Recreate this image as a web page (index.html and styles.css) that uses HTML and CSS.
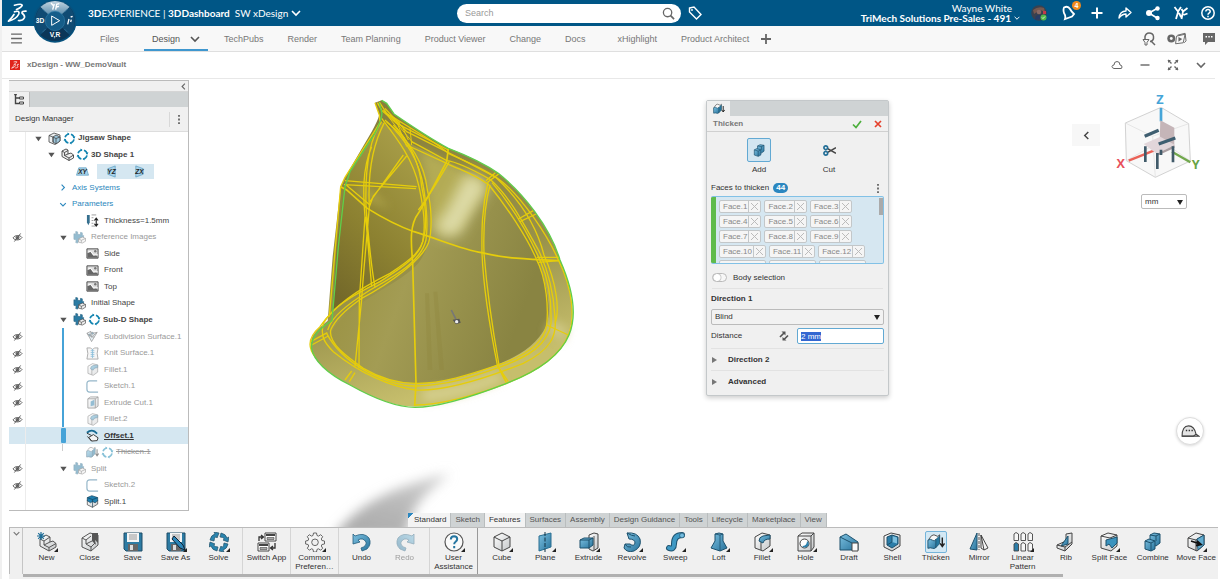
FILE: index.html
```html
<!DOCTYPE html>
<html lang="en">
<head>
<meta charset="utf-8">
<title>xDesign - WW_DemoVault</title>
<link rel="stylesheet" href="styles.css">
</head>
<body>
<svg class="defs" aria-hidden="true">
  <defs>
    <linearGradient id="blue" x1="0" y1="0" x2="1" y2="1"><stop offset="0" stop-color="#7cc0e0"/><stop offset="1" stop-color="#27739c"/></linearGradient>
    <linearGradient id="grey" x1="0" y1="0" x2="1" y2="1"><stop offset="0" stop-color="#fff"/><stop offset="1" stop-color="#c4c7c9"/></linearGradient>
  </defs>
  <symbol id="chev" viewBox="0 0 10 10"><path d="M1 3l4 4 4-4" fill="none" stroke="currentColor" stroke-width="1.6"/></symbol>
  <symbol id="left" viewBox="0 0 10 10"><path d="M7 1L3 5l4 4" fill="none" stroke="currentColor" stroke-width="1.6"/></symbol>
  <symbol id="right" viewBox="0 0 10 10"><path d="M3 1l4 4-4 4" fill="none" stroke="currentColor" stroke-width="1.6"/></symbol>
  <symbol id="caret" viewBox="0 0 10 10"><path d="M2 3h7L5.500 8z" fill="#555"/></symbol>
  <symbol id="dots" viewBox="0 0 4 12"><path d="M1 1h2v2H1zM1 5h2v2H1zM1 9h2v2H1z" fill="#666"/></symbol>
  <symbol id="ds" viewBox="0 0 20 20"><g fill="none" stroke="#fff" stroke-width="1.700" stroke-linecap="round" stroke-linejoin="round"><path d="M7.500 2.200Q15 .3 15.200 2.300 14.500 4.500 9.500 6.500"/><path d="M7.500 8.800Q13 7 11.800 11 9.500 16 1.500 18.200 5.500 14 7 11.500"/><path d="M19 8.200Q14.500 8 15 10q3 2.500 2.500 4.500Q16 18 11.500 17.500"/></g></symbol>
  <symbol id="eye" viewBox="0 0 12 10"><g fill="none" stroke="#555"><path d="M1 5.500C3 2 9 2 11 5c-2 3.500-8 3.500-10 .5z"/><circle cx="6" cy="5.200" r="1.700" fill="#777"/><path d="M2.500 9.500l7-9"/></g></symbol>
  <symbol id="sync" viewBox="0 0 13 13"><circle cx="6.500" cy="6.500" r="4.600" fill="none" stroke="#1284b0" stroke-width="1.600" stroke-dasharray="5.200 2.020" stroke-dashoffset="-1"/><path d="M4.500 .5l2 1.400-2 1.400zM8.500 12.500l-2-1.400 2-1.400zM.5 8.500l1.400-2 1.400 2zM12.500 4.500l-1.400 2-1.400-2z" fill="#1284b0"/></symbol>
  <symbol id="product" viewBox="0 0 13 13"><g stroke="#444" stroke-width=".8" stroke-linejoin="round"><path d="M1 3.500L6 1l6 2v6l-5 3.500L1 10z" fill="#eceff0"/><path d="M5 5l3-2 4 2v4l-4 3-3-2z" fill="#9cc6dc"/><path d="M1 3.500L5 5v5.500M5 5l3 1.500L12 5M8 6.500V12" fill="none"/></g></symbol>
  <symbol id="part" viewBox="0 0 13 13"><g stroke="#444" stroke-width=".9" stroke-linejoin="round"><path d="M1 3l4-2 2 1v4l3-1 2.500 2v3L8 12.500 1 8.500z" fill="#eee"/><path d="M1 3l2.500 1.500v3L8 10v2.500M3.500 4.500L7 2.500M3.500 7.500L7 6M8 10l4.500-3" fill="none"/></g></symbol>
  <symbol id="body" viewBox="0 0 14 13"><g stroke="#246080" stroke-width=".7"><path d="M1 2.500l2 .5V0l2 .5V3l3 .5V1l2 .5V4l1.500.5-.5 3-2-.5v3.500l-3-.5-1 2.500-2-.5.500-3L1 8.500z" fill="#2b7ba3"/><path d="M6 8l4-2 3.500 1.500v3L10 12.500 6 11.500z" fill="#eee" stroke="#444"/><path d="M6 8l3 1.500v2.500M9 9.500l4.500-2" fill="none" stroke="#444"/></g></symbol>
  <symbol id="image" viewBox="0 0 14 13"><path d="M1 1.500h12v10H1z" fill="#ddd" stroke="#444"/><path d="M1.500 6L5 5l3 4 3-1 2 3H1.500z" fill="#666"/><path d="M2 5l3-1 3 4 5 0" fill="none" stroke="#fff"/><circle cx="10" cy="4" r="1.300" fill="#777"/></symbol>
  <symbol id="param" viewBox="0 0 14 14"><path d="M1 1h3v8l-1.500 3L1 9z" fill="#356f8e"/><path d="M6 1h5M6 4h2M6 7h2M6 10h2M6 13h4" stroke="#999"/><path d="M11 5v7M9 7l2-2.500L13 7M9 10.500l2 2.500 2-2.500" fill="none" stroke="#222" stroke-width="1.200"/></symbol>
  <symbol id="subd" viewBox="0 0 14 13"><g fill="#cfe2ec" stroke="#333" stroke-width=".8"><path d="M1 3l4-2 2 2 5-1-3 5-3 5-2-4z"/><path d="M5 1l1 6 3 0M1 3l5 4 6-5" fill="none"/><circle cx="7" cy="3" r="1" fill="#1a80b8"/><circle cx="4" cy="5" r="1" fill="#1a80b8"/></g></symbol>
  <symbol id="knit" viewBox="0 0 14 14"><path d="M1 1h4l2 2 2-2h4l-1 6 1 6H1l1-6z" fill="#eee" stroke="#444" stroke-width=".9"/><path d="M5 4h4M5 6h4M5 8h4M5 10h4M7 2v10" stroke="#1a80b8" stroke-width=".9"/></symbol>
  <symbol id="sketch" viewBox="0 0 14 14"><path d="M12 1H4Q1 1 1 4v6q0 3 3 3h9" fill="none" stroke="#2d6f94" stroke-width="1.300"/></symbol>
  <symbol id="offset" viewBox="0 0 14 13"><path d="M3 8.500l5-3 5 3.500-1 3-6 .5z" fill="#f4f4f4" stroke="#333"/><path d="M1 3.500q4-3.500 8-1.500l3 2.500" fill="none" stroke="#176a92" stroke-width="2"/><path d="M1 4l5 2.500M6 12.500L1.500 7.500" stroke="#333"/></symbol>
  <symbol id="excut" viewBox="0 0 14 14"><path d="M2 3l3-2h8v10l-3 2H2z" fill="url(#grey)" stroke="#444" stroke-width=".9"/><path d="M2 3h8v10M10 3l3-2" fill="none" stroke="#444" stroke-width=".9"/><path d="M5 6l4-2v6l-4 1z" fill="#2b7da8"/></symbol>

  <symbol id="new" viewBox="0 0 20 20"><g stroke="#555" stroke-linejoin="round"><path d="M3 7l6-4 4 2v5l3-1 3 2.500v3.500l-7 4-9-5z" fill="url(#grey)"/><path d="M3 7l4 2v4l5 2.500V19M7 9l6-4M7 13l6-3M12 15.500l7-4" fill="none"/></g><path d="M4 0v8M0 4h8M1.200 1.200l5.600 5.600M6.800 1.200L1.200 6.800" stroke="#1d6d98" stroke-width="1.200"/></symbol>
  <symbol id="close" viewBox="0 0 20 20"><path d="M2 6l8-5 8 2v10l-7 6-9-4z" fill="url(#grey)" stroke="#555"/><path d="M2 6l4 2v4l5 3v4M6 8l5-4M6 12l6-3M11 15l4-4" fill="none" stroke="#555"/><path d="M12 1h6v10l-3-3 1 5-4-4z" fill="#555"/></symbol>
  <symbol id="save" viewBox="0 0 20 20"><path d="M1 1h18v18H3l-2-2z" fill="#2d7ba3" stroke="#1f4d66"/><path d="M4 1h12v9H4z" fill="#f5f5f5"/><path d="M6 3h8M6 5h8M6 7h8" stroke="#999"/><path d="M5 12h10v7H5z" fill="#666"/><path d="M7 13h3v5H7z" fill="#ddd"/></symbol>
  <symbol id="saveas" viewBox="0 0 20 20"><use href="#save"/><path d="M8 4l9 9 2 5-5-2-8-9z" fill="#2c86b8" stroke="#123"/></symbol>
  <symbol id="solve" viewBox="0 0 20 20"><g fill="#2a84ae" stroke="#235068" stroke-width=".7"><path id="sv" d="M1 8q1-5 5-6L5 0l5 1-2 5-1-1.500Q5 6 5 9z"/><use href="#sv" transform="rotate(90 10 10)"/><use href="#sv" transform="rotate(180 10 10)"/><use href="#sv" transform="rotate(270 10 10)"/></g></symbol>
  <symbol id="switch" viewBox="0 0 20 20"><g fill="#fff" stroke="#444"><path d="M8 1h11v8H8zM1 11h11v8H1z"/><path d="M9 3h9M2 13h9" stroke-width="2"/><path d="M10 5.500h7v2h-7zM3 15.500h7v2H3z" fill="#aaa" stroke-width=".6"/></g><path d="M2 9V5h4M4 3l2.500 2L4 7M18 11v5h-4M16 14l-2.500 2 2.500 2" fill="none" stroke="#333" stroke-width="1.300"/></symbol>
  <symbol id="gear" viewBox="0 0 20 20"><path d="M8.500 1h3l.5 2.500 1.500.6 2.200-1.400 2 2-1.400 2.200.6 1.600 2.600.5v3l-2.600.5-.6 1.500 1.400 2.200-2 2-2.200-1.400-1.500.6-.5 2.600h-3l-.5-2.600-1.500-.6-2.200 1.400-2-2 1.400-2.200-.6-1.500L.6 12V9l2.500-.5.6-1.600-1.400-2.200 2-2 2.200 1.400L8 3.500z" fill="#f4f4f4" stroke="#666"/><circle cx="10" cy="10.300" r="3.300" fill="#f0f0f0" stroke="#666"/></symbol>
  <symbol id="undo" viewBox="0 0 20 20"><path d="M1 2l2 2q9-4 14 2 3 6-2 11l-5 2-1-3q6-2 5-6-3-5-8-2l2 2-7 2z" fill="url(#blue)" stroke="#245e7e" stroke-width=".8"/></symbol>
  <symbol id="help" viewBox="0 0 20 20"><circle cx="10" cy="10" r="9" fill="#fafafa" stroke="#555" stroke-width="1.200"/><path d="M6.800 7.500q.2-3.200 3.300-3.200 3 .1 3.100 2.700 0 1.500-1.600 2.700-1.400 1-1.400 2.600M10.200 14v2.200" fill="none" stroke="#2475a0" stroke-width="2"/></symbol>
  <symbol id="cube" viewBox="0 0 20 20"><path d="M2 5l8-4 8 4v10l-8 4-8-4z" fill="url(#grey)" stroke="#444"/><path d="M2 5l8 4 8-4M10 9v10" fill="none" stroke="#444"/></symbol>
  <symbol id="plane" viewBox="0 0 20 20"><path d="M4 4l12-3v14L4 19z" fill="url(#blue)" stroke="#2a6f92"/><path d="M10 0v20" stroke="#134" stroke-dasharray="4 1.500"/></symbol>
  <symbol id="extrude" viewBox="0 0 20 20"><path d="M10 3l5-2 4 1v14l-5 3-4-2z" fill="url(#grey)" stroke="#444"/><path d="M15 4v14" stroke="#555"/><path d="M1 8l4-2h9v7l-4 3H1z" fill="url(#blue)" stroke="#1d516d"/><path d="M1 8h9v8M10 8l4-2" fill="none" stroke="#1d516d"/></symbol>
  <symbol id="revolve" viewBox="0 0 20 20"><path d="M5 1q10-1 13 6 2 8-6 12-7 2-10-3l1-4 5 0q4 3 5-1 0-4-6-4z" fill="url(#blue)" stroke="#1d516d"/><path d="M3 12q2 4 6 3M5 1q5 3 8 3" fill="none" stroke="#1d516d"/></symbol>
  <symbol id="sweep" viewBox="0 0 20 20"><path d="M4 16q5 2 5-4 0-9 8-9" fill="none" stroke="#1d516d" stroke-width="6" stroke-linecap="round"/><path d="M4 16q5 2 5-4 0-9 8-9" fill="none" stroke="#3f99c4" stroke-width="4" stroke-linecap="round"/><circle cx="17" cy="3.500" r="2.400" fill="#72bce0" stroke="#1d516d" stroke-width=".7"/></symbol>
  <symbol id="loft" viewBox="0 0 20 20"><path d="M6 2l4-1 4 1v7l4 7-7 3-9-3 4-7z" fill="url(#blue)" stroke="#1d516d"/><path d="M6 2l5 1 3-1M11 3v7l0 9" fill="none" stroke="#1d516d" stroke-width=".8"/></symbol>
  <symbol id="fillet" viewBox="0 0 20 20"><path d="M3 5l7-4 8 2v11l-7 5-8-3z" fill="url(#grey)" stroke="#444"/><path d="M9 18V9l9-4" fill="none" stroke="#444"/><path d="M7 9q0-4 4-5l7-1v4q-6 0-7 4z" fill="url(#blue)" stroke="#1d516d"/></symbol>
  <symbol id="hole" viewBox="0 0 20 20"><path d="M2 4l4-3h12v14l-3 4H2z" fill="url(#grey)" stroke="#444"/><path d="M2 4h13v15M15 4l3-3" fill="none" stroke="#444"/><circle cx="8.500" cy="11.500" r="4.500" fill="#fff" stroke="#444"/><path d="M6 14q5 0 5-5 3 2 1 5-3 3-6 0z" fill="#2e82ad"/></symbol>
  <symbol id="draft" viewBox="0 0 20 20"><path d="M1 5l6-3 12 8v8H1z" fill="url(#blue)" stroke="#1d516d"/><path d="M13 11h6v8h-6z" fill="#fafafa" stroke="#444"/><path d="M1 5l12 6" stroke="#1d516d"/></symbol>
  <symbol id="shell" viewBox="0 0 20 20"><path d="M2 4l7-3 9 2v11l-8 5-8-4z" fill="url(#grey)" stroke="#444"/><path d="M5 5l5-2 6 2v7l-6 4-5-3z" fill="#2b7da8" stroke="#1d516d"/><path d="M10 4l5 1.500v6l-5-1.500z" fill="#7cc0e0"/><path d="M10 3v7l-5 3" fill="none" stroke="#1d516d"/></symbol>
  <symbol id="thicken" viewBox="0 0 20 20"><path d="M2 7l3-4q3-2 5 0t4-1v8l-4 6H2z" fill="#f7f7f7" stroke="#444"/><path d="M1 8q3-2 5 0t4-1v9q-2 2-4 1t-5 0z" fill="url(#blue)" stroke="#1d516d"/><path d="M10 7l4-4v9l-4 4z" fill="#26789f" stroke="#1d516d" stroke-width=".6"/><path d="M17 5v9M14.500 11.500l2.500 3.500 2.500-3.500" fill="none" stroke="#222" stroke-width="1.600"/></symbol>
  <symbol id="mirror" viewBox="0 0 20 20"><path d="M8 1v17l-7-1z" fill="url(#blue)" stroke="#1d516d"/><path d="M10 1v17" stroke="#555" stroke-dasharray="3 1"/><path d="M12 3l7 13-4 2-3-2z" fill="#f4f4f4" stroke="#444"/><path d="M12 3l3 15" stroke="#444"/></symbol>
  <symbol id="pattern" viewBox="0 0 20 20"><g fill="#f6f6f6" stroke="#444" stroke-width=".9"><path d="M1 2l2-1.500L5.500 2v6.500H1zM8 2l2-1.500L12.500 2v6.500H8zM15 2l2-1.500L19.500 2v6.500H15zM8 12l2-1.500 2.500 1.500v7H8zM15 12l2-1.500 2.500 1.500v7H15z"/><path d="M1 12l2-1.500L5.500 12v7H1z" fill="#2b7da8"/></g></symbol>
  <symbol id="rib" viewBox="0 0 20 20"><path d="M1 13l9-4V2l6-1v11l-7 7-8-3z" fill="url(#grey)" stroke="#444"/><path d="M12 4v8l-7 2z" fill="url(#blue)" stroke="#1d516d"/><path d="M1 13l8 2v4M9 15l7-5" fill="none" stroke="#444"/></symbol>
  <symbol id="splitface" viewBox="0 0 20 20"><path d="M2 4l7-3 9 2v11l-6 5-10-3z" fill="url(#grey)" stroke="#444"/><path d="M2 4l9 2 7-3" fill="none" stroke="#444"/><path d="M7 8l11-3v6l-5 5-3-4-3 2z" fill="#3b93be" stroke="#1d516d"/></symbol>
  <symbol id="splitbody" viewBox="0 0 20 20"><path d="M2 8l16 0v6l-8 5-8-4z" fill="url(#grey)" stroke="#333"/><path d="M2 4l7-3 9 3v5l-4 3-4-2-3 2-5-3z" fill="#1f7fb0" stroke="#123f58"/><path d="M2 4l8 3 8-3M10 7v12" fill="none" stroke="#123f58"/></symbol>
  <symbol id="combine" viewBox="0 0 20 20"><g fill="url(#blue)" stroke="#1d516d"><path d="M7 3l4-2 6 1v9l-4 3-6-2z"/><path d="M2 9l4-2 6 2v8l-4 2-6-2z"/><path d="M2 9l6 2v8M8 11l4-2M7 3l6 1v5M13 4l4-2" fill="none"/></g></symbol>
  <symbol id="move" viewBox="0 0 20 20"><path d="M2 6l8-5 8 2v10l-7 6-9-4z" fill="url(#grey)" stroke="#444"/><path d="M2 6l8 2 8-5M10 8v11" fill="none" stroke="#444"/><path d="M11 7l7-4v10l-6 5z" fill="#62acd0" stroke="#1d516d"/><path d="M5 9l9 3M11 9l4 3.500-5 1" fill="none" stroke="#111" stroke-width="1.800"/></symbol>
</svg>

<header class="topbar">
  <div class="brand">
    <svg class="logo" viewBox="0 0 20 20"><use href="#ds"/></svg>
    <span class="brand-text"><b>3D</b>EXPERIENCE | <b>3DDashboard</b></span>
    <button class="app-menu">SW xDesign <svg class="i10"><use href="#chev"/></svg></button>
  </div>
  <button class="compass" aria-label="Compass">
    <svg viewBox="0 0 132 132">
      <defs><linearGradient id="top" x1="0" y1="0" x2="0" y2="1"><stop offset="0" stop-color="#c2d4e0"/><stop offset="1" stop-color="#2f6f97"/></linearGradient></defs>
      <circle cx="66" cy="66" r="65" fill="#06517d"/><circle cx="66" cy="66" r="60" fill="#0a3d62"/>
      <path d="M66 66L22 24Q42 6 66 6t44 18z" fill="url(#top)"/>
      <path d="M66 66L22 24Q8 42 7 66t16 42zM66 66l44-42q14 18 15 42t-16 42z" fill="#104b73"/>
      <path d="M23 108q43 35 86 0L66 66z" fill="#0b3658"/>
      <path d="M28 100l10-10M94 90l10 10M28 30l10 10M104 30L94 40" stroke="#3d7ea6" stroke-width="2"/>
      <circle cx="66" cy="66" r="29" fill="#155d89" stroke="#2f7ba7" stroke-width="2"/>
      <path d="M56 51l24 14-24 14z" fill="none" stroke="#fff" stroke-width="3"/>
      <path d="M54 12l8 9 2-6M62 21l-3 11M68 32l3-16 8-2M70 24l8-2" fill="none" stroke="#fff" stroke-width="4"/>
      <path d="M108 60l-4 16M113 54l6-2M115 62l-2 7" fill="none" stroke="#fff" stroke-width="4"/>
      <text x="21" y="73" class="compass-text">3D</text><text x="66" y="113" class="compass-text">V,R</text>
    </svg>
  </button>
  <label class="search"><input type="search" placeholder="Search" aria-label="Search">
    <svg viewBox="0 0 14 14"><circle cx="6" cy="6" r="4.500" fill="none" stroke="#666" stroke-width="1.400"/><path d="M9 9l4 4" stroke="#666" stroke-width="1.800"/></svg></label>
  <button class="tag" aria-label="Tags"><svg viewBox="0 0 14 14"><path d="M1.500 2L6 1l7 7.500-4.500 4.500L1.500 6z" fill="none" stroke="#fff" stroke-width="1.400"/><circle cx="4" cy="4" r=".9" fill="#fff"/></svg></button>
  <div class="account"><span>Wayne White</span><button class="tenant">TriMech Solutions Pre-Sales - 491 <svg class="i6"><use href="#chev"/></svg></button></div>
  <div class="tools">
    <button class="avatar" aria-label="Profile"><svg viewBox="0 0 16 16"><circle cx="8" cy="8" r="7.800" fill="#39414f"/><path d="M2 5q5-4 11-2l1 4-5-2-6 4z" fill="#76584f"/><circle cx="8" cy="7" r="2.300" fill="#8a6a66"/><path d="M4 15q0-5 4-5 5 1 5 4z" fill="#263c66"/><path d="M12 6h3v3h-3z" fill="#c4384a"/><circle cx="12.500" cy="12.500" r="3" fill="#52b848"/><path d="M11 12.500l1 1 2-2" fill="none" stroke="#fff" stroke-width=".8"/></svg></button>
    <button class="alerts" aria-label="Notifications"><svg viewBox="0 0 16 16"><path d="M3 2.500q4-2 6 1.500 1 2 4 5l-2 2.500-7 2.500q1-3-1-6-1-3 0-5.500z" fill="none" stroke="#fff" stroke-width="1.800"/></svg><span class="badge">4</span></button>
    <button aria-label="Add"><svg viewBox="0 0 16 16"><path d="M8 2.500v11M2.500 8h11" stroke="#fff" stroke-width="2"/></svg></button>
    <button aria-label="Share"><svg viewBox="0 0 16 16"><path d="M2 13q1-7 7-7V3l5 4.500L9 12V9q-4 0-7 4z" fill="none" stroke="#fff" stroke-width="1.400" stroke-linejoin="round"/></svg></button>
    <button aria-label="Network"><svg viewBox="0 0 16 16"><path d="M4 8l8-4.500M4 8l8 5" stroke="#fff" stroke-width="1.600"/><circle cx="4" cy="8" r="3" fill="#fff"/><circle cx="12.500" cy="3.500" r="2.200" fill="#fff"/><circle cx="12.500" cy="13" r="2.200" fill="#fff"/></svg></button>
    <button aria-label="Communities"><svg viewBox="0 0 16 16"><path d="M1.500 2l3.500 4.500L8 2M5.200 6.500L3 14M6 8l2 4M14.500 3L10 6.500 8.500 14M10 6.500L8.500 4M10.500 10l4-1.500" fill="none" stroke="#fff" stroke-width="1.800"/></svg></button>
    <button aria-label="Help"><svg viewBox="0 0 16 16"><circle cx="8" cy="8" r="6.200" fill="none" stroke="#fff" stroke-width="1.500"/><path d="M5.800 6.500Q6 4.500 8 4.500t2.200 1.900q0 1-1.200 1.700-1 .6-1 1.600M8 10.700v1.500" fill="none" stroke="#fff" stroke-width="1.500"/></svg></button>
  </div>
</header>

<nav class="tabs">
  <button class="menu" aria-label="Menu"><svg viewBox="0 0 12 12"><path d="M1 2h10M1 6h10M1 10h10" stroke="#666" stroke-width="1.300"/></svg></button>
  <a href="#">Files</a>
  <a href="#" class="active">Design <svg class="i10"><use href="#chev"/></svg></a>
  <a href="#">TechPubs</a><a href="#">Render</a><a href="#">Team Planning</a><a href="#">Product Viewer</a><a href="#">Change</a><a href="#">Docs</a><a href="#" class="wide">xHighlight</a><a href="#">Product Architect</a>
  <button class="add" aria-label="Add tab"><svg viewBox="0 0 10 10"><path d="M5 0v10M0 5h10" stroke="#666" stroke-width="1.800"/></svg></button>
  <div class="nav-tools">
    <button aria-label="Find"><svg class="i14" viewBox="0 0 14 14"><path d="M3 7V4.500Q4 1 7 1q4 0 4.500 3.500Q12 9 8 9.500M9 9l4 4" fill="none" stroke="#666" stroke-width="1.500"/><path d="M1 7.500h6L5 10.500V13H3v-2.500z" fill="none" stroke="#666"/></svg></button>
    <button aria-label="Media"><svg class="i20" viewBox="0 0 21 14"><circle cx="4.500" cy="6.500" r="4.200" fill="#666"/><circle cx="4.500" cy="6.500" r="1.500" fill="#f8f8f8"/><path d="M10 4l9-2-2 9-8 1zM11 3l8-2 1 8-2 2" fill="none" stroke="#666"/><path d="M12 5l4 2-4 3z" fill="#666"/></svg></button>
    <button class="comments" aria-label="Comments"><svg class="i14" viewBox="0 0 14 14"><path d="M1 1h12v9H6l-3 3v-3H1z" fill="#666"/><path d="M3.500 4h1.500v1.500H3.500zM6.300 4h1.500v1.500H6.300zM9 4h1.500v1.500H9z" fill="#fff"/></svg></button>
  </div>
</nav>

<div class="titlebar">
  <span class="app-icon"><svg viewBox="0 0 20 20"><use href="#ds"/></svg></span>
  <h1>xDesign - WW_DemoVault</h1>
  <div class="window-tools">
    <button aria-label="Cloud"><svg viewBox="0 0 12 12"><path d="M3 9.500Q1 9 1 7.500 1.200 6 3 6q0-3.500 3-3.500T9 6q2 0 2 2t-2 1.500z" fill="none" stroke="#666"/></svg></button>
    <button aria-label="Minimize"><svg viewBox="0 0 12 12"><path d="M1.500 6h9" stroke="#666" stroke-width="1.400"/></svg></button>
    <button aria-label="Full screen"><svg viewBox="0 0 12 12"><path d="M1 1h3L1 4zM11 1v3L8 1zM1 11V8l3 3zM11 11H8l3-3z" fill="#666"/><path d="M1 1l3.500 3.500M11 1L7.500 4.500M1 11l3.500-3.500M11 11L7.500 7.500" stroke="#666" stroke-width="1.400"/></svg></button>
    <button aria-label="More"><svg class="small"><use href="#chev"/></svg></button>
  </div>
</div>

<main class="workspace">
  <svg class="model" viewBox="0 0 930 1311" aria-label="Jigsaw shape model">
    <defs>
      <linearGradient id="floor" x1="0" y1="0" x2="1" y2=".4"><stop offset="0" stop-color="#958a3c"/><stop offset=".3" stop-color="#9d9548"/><stop offset=".5" stop-color="#a39c54"/><stop offset="1" stop-color="#898442"/></linearGradient>
      <linearGradient id="wall" x1=".7" y1="0" x2=".2" y2="1"><stop offset="0" stop-color="#aaa04a"/><stop offset=".6" stop-color="#8c8131"/><stop offset="1" stop-color="#74692a"/></linearGradient>
      <linearGradient id="rim" x1="0" y1="0" x2=".3" y2="1"><stop offset="0" stop-color="#857c39"/><stop offset=".65" stop-color="#98914a"/><stop offset="1" stop-color="#c6be6c"/></linearGradient>
      <linearGradient id="fade" x1=".2" y1="1" x2=".8" y2="0"><stop offset="0" stop-color="#aaa"/><stop offset=".5" stop-color="#b8b8b8"/><stop offset="1" stop-color="#d0d0d0"/></linearGradient>
      <filter id="soft" x="-50%" y="-50%" width="200%" height="200%"><feGaussianBlur stdDeviation="17"/></filter>
      <filter id="glow" x="-50%" y="-50%" width="200%" height="200%"><feGaussianBlur stdDeviation="12"/></filter>
      <filter id="haze" x="-60%" y="-60%" width="220%" height="220%"><feGaussianBlur stdDeviation="20"/></filter>
    </defs>
    <path d="M130 1340C210 1230 330 1185 480 1150C420 1200 355 1250 350 1340z" fill="url(#fade)" filter="url(#soft)"/>
    <path d="M255 38L275 31L290 40L312 72C360 105 420 145 475 175C540 200 590 225 625 250C700 310 780 410 810 510C850 600 855 680 835 735C810 800 740 845 650 880C560 915 450 950 375 950C320 950 260 930 180 885C110 850 70 810 62 775C58 735 80 720 113 692L128 500L152 290L165 262L245 125Q262 95 268 75z" fill="url(#rim)"/>
    <path d="M275 95L180 250L160 300L140 470L128 660C170 625 280 570 345 525C400 490 420 430 418 370C410 290 380 200 340 140z" fill="url(#wall)"/>
    <path d="M350 155L470 215C520 240 570 255 600 285C650 330 720 430 745 510C770 590 785 650 770 705C740 770 680 800 620 825C540 855 460 882 375 880C300 878 230 850 190 820C150 790 125 765 122 735C130 700 180 665 220 635C280 595 350 560 385 520C430 460 430 380 415 310C400 240 370 190 350 155z" fill="url(#floor)"/>
    <path d="M390 180L470 220L590 280Q560 340 510 420Q450 440 425 410Q420 270 390 180z" fill="#b9b156" filter="url(#glow)" opacity=".75"/>
    <path d="M530 250Q600 270 590 300Q545 360 510 430Q450 460 435 405Q475 360 500 300z" fill="#e0deac" filter="url(#haze)" opacity=".95"/>
    <path d="M210 285Q250 290 300 355Q240 345 205 310z" fill="#b0a64c" filter="url(#glow)" opacity=".7"/>
    <path d="M400 900Q520 890 620 850L640 870Q510 930 400 935z" fill="#d4ce8c" filter="url(#glow)"/>
    <path d="M790 690l45 25-15 40-55-30z" fill="#cdc683" filter="url(#glow)"/>
    <path d="M405 610h12l10 230h-14zM430 605h12l20 235h-14z" fill="#8d853d" opacity=".3"/>
    <g fill="none" stroke="#e6cd0b" stroke-width="4">
      <path d="M255 38L268 75L270 98L165 262L152 290L118 680M262 38L276 62L320 100L475 180M268 36L290 70L330 100"/>
      <path d="M152 290L170 300L232 355C280 385 330 410 372 425C440 445 520 480 575 488C640 505 720 508 810 512" stroke-width="5"/>
      <path d="M165 272L380 290M162 284L378 296M165 282L240 345M740 502L808 502M745 517L810 512"/>
      <path d="M275 95C235 150 225 240 228 350C235 440 242 520 255 592M283 98C240 180 234 270 238 350C232 430 222 520 215 628L195 830M245 170C215 240 220 320 225 380L208 630L207 835M227 380L245 590"/>
      <path d="M340 195L240 335M350 198L250 318L238 350"/>
      <path d="M275 85C325 150 370 210 387 290C400 350 408 400 400 440C398 495 340 530 270 575C180 620 130 650 90 710C45 750 60 780 75 800"/>
      <path d="M285 90C350 150 390 220 400 290C410 350 415 400 408 450C395 505 340 545 240 600C170 645 125 680 113 720"/>
      <path d="M290 95C370 160 405 230 412 300C425 350 428 420 415 460C395 510 300 580 215 625C160 665 135 690 122 720"/>
      <path d="M310 105C365 160 390 230 395 290C405 330 412 400 402 440C395 480 370 505 300 550C200 600 130 650 100 700C90 740 105 760 130 785C210 850 300 890 376 900C470 905 600 860 700 820C780 780 802 740 795 680C790 600 775 540 745 480C700 400 660 320 600 268C550 240 500 215 470 212L365 155"/>
      <path d="M122 720C115 760 170 800 220 835C280 870 330 880 376 880C460 882 550 850 625 825C700 800 760 765 770 705C775 660 772 570 738 505C710 440 650 350 597 285C550 250 510 240 470 220L350 165"/>
      <path d="M110 730C130 770 170 810 230 845C280 870 330 890 376 888C470 888 550 860 625 833C720 800 775 760 783 700C785 640 780 580 752 515C710 420 660 340 606 278"/>
      <path d="M285 55L350 125C420 160 540 220 617 262C690 330 740 410 762 495C800 580 810 660 795 700"/>
      <path d="M300 75C350 110 430 150 475 190C540 220 600 245 640 278C700 330 770 430 806 512C850 600 855 690 835 735C810 800 740 845 650 880C560 915 450 945 375 945"/>
      <path d="M475 175L470 215C440 270 410 330 385 370C355 410 365 470 368 520L378 880L374 948" stroke-width="5"/>
      <path d="M478 215C440 280 410 330 385 360M626 252L594 276C575 360 575 420 576 490C580 590 605 740 622 825L650 880M600 285C580 360 580 430 582 490C590 590 610 730 627 825M616 248L588 272"/>
      <path d="M730 362L685 387M738 372L690 395M770 705L835 735M65 765L115 738M62 755L112 728M185 843L165 870M195 848L178 875M622 825L645 870M630 838L655 875"/>
      <path d="M300 75L370 160M320 95L350 170M335 105L355 150M360 115L365 165M280 60L345 145" stroke-width="3"/>
    </g>
    <path d="M275 31L290 40L312 72C360 105 420 145 475 175C540 200 590 225 625 250C700 310 780 410 810 510C850 600 860 680 837 735C810 800 740 845 650 880C560 915 450 952 375 952C320 952 260 930 180 885C110 850 70 810 65 775C62 745 80 720 126 692L145 470L165 290L180 245L255 130Q275 90 276 70L268 38" fill="none" stroke="#5fce4b" stroke-width="4"/>
    <path d="M484 660l14 28" stroke="#777" stroke-width="5"/><path d="M498 703l-10-14 20-3 4 12z" fill="#555"/><circle cx="500" cy="695" r="5" fill="#eee"/>
  </svg>

  <aside class="manager">
    <div class="collapse"><button aria-label="Collapse"><svg><use href="#left"/></svg></button></div>
    <div class="panel-tabs"><button aria-label="Tree"><svg viewBox="0 0 10 11"><path d="M1.500 0v9.500H5M1.500 4H5" fill="none" stroke="#444" stroke-width="1.400"/><path d="M0 .7h3M5.500 3h4v2h-4zM5.500 8h4v2h-4z" fill="none" stroke="#444"/></svg></button></div>
    <div class="panel-head"><h2>Design Manager</h2><button aria-label="Options"><svg><use href="#dots"/></svg></button></div>
    <div class="tree-window">
      <ul class="tree">
        <li class="d1"><span class="vis"></span><svg class="tw"><use href="#caret"/></svg><svg class="ic"><use href="#product"/></svg><svg class="ic"><use href="#sync"/></svg><b>Jigsaw Shape</b></li>
        <li class="d2"><span class="vis"></span><svg class="tw"><use href="#caret"/></svg><svg class="ic"><use href="#part"/></svg><svg class="ic"><use href="#sync"/></svg><b>3D Shape 1</b></li>
        <li class="planes"><span class="vis"></span><svg class="ic" viewBox="0 0 14 10"><path d="M3 1h8l2.500 8H.5z" fill="#a9d3ea" stroke="#3a8ab5" stroke-width=".6"/><text x="7" y="7.500" class="plane-name">XY</text></svg><span class="picked"><svg class="ic" viewBox="0 0 12 14"><path d="M2 4l8-3v12l-8-3z" fill="#a9d3ea" stroke="#3a8ab5" stroke-width=".6"/><text x="6" y="9.500" class="plane-name">YZ</text></svg><svg class="ic" viewBox="0 0 12 14"><path d="M2 1l8 3v6l-8 3z" fill="#a9d3ea" stroke="#3a8ab5" stroke-width=".6"/><text x="6" y="9.500" class="plane-name">ZX</text></svg></span></li>
        <li class="d3 link"><span class="vis"></span><svg class="tw"><use href="#right"/></svg><a href="#">Axis Systems</a></li>
        <li class="d3 link"><span class="vis"></span><svg class="tw"><use href="#chev"/></svg><a href="#">Parameters</a></li>
        <li class="leaf"><span class="vis"></span><span class="tw"></span><svg class="ic"><use href="#param"/></svg><span>Thickness=1.5mm</span></li>
        <li class="d3 off"><span class="vis"><svg><use href="#eye"/></svg></span><svg class="tw"><use href="#caret"/></svg><svg class="ic"><use href="#body"/></svg><span>Reference Images</span></li>
        <li class="leaf"><span class="vis"></span><span class="tw"></span><svg class="ic"><use href="#image"/></svg><span>Side</span></li>
        <li class="leaf"><span class="vis"></span><span class="tw"></span><svg class="ic"><use href="#image"/></svg><span>Front</span></li>
        <li class="leaf"><span class="vis"></span><span class="tw"></span><svg class="ic"><use href="#image"/></svg><span>Top</span></li>
        <li class="d3"><span class="vis"></span><span class="tw"></span><svg class="ic"><use href="#body"/></svg><span>Initial Shape</span></li>
        <li class="d3"><span class="vis"></span><svg class="tw"><use href="#caret"/></svg><svg class="ic"><use href="#body"/></svg><svg class="ic"><use href="#sync"/></svg><b>Sub-D Shape</b></li>
        <li class="leaf off"><span class="vis"><svg><use href="#eye"/></svg></span><span class="tw rail"></span><svg class="ic"><use href="#subd"/></svg><span>Subdivision Surface.1</span></li>
        <li class="leaf off"><span class="vis"><svg><use href="#eye"/></svg></span><span class="tw rail"></span><svg class="ic"><use href="#knit"/></svg><span>Knit Surface.1</span></li>
        <li class="leaf off"><span class="vis"><svg><use href="#eye"/></svg></span><span class="tw rail"></span><svg class="ic"><use href="#fillet"/></svg><span>Fillet.1</span></li>
        <li class="leaf off"><span class="vis"><svg><use href="#eye"/></svg></span><span class="tw rail"></span><svg class="ic"><use href="#sketch"/></svg><span>Sketch.1</span></li>
        <li class="leaf off"><span class="vis"><svg><use href="#eye"/></svg></span><span class="tw rail"></span><svg class="ic"><use href="#excut"/></svg><span>Extrude Cut.1</span></li>
        <li class="leaf off"><span class="vis"><svg><use href="#eye"/></svg></span><span class="tw rail"></span><svg class="ic"><use href="#fillet"/></svg><span>Fillet.2</span></li>
        <li class="leaf current"><span class="vis"></span><span class="tw rail handle"></span><svg class="ic"><use href="#offset"/></svg><b>Offset.1</b></li>
        <li class="leaf off"><span class="vis"></span><span class="tw rail idle"></span><svg class="ic"><use href="#thicken"/></svg><svg class="ic"><use href="#sync"/></svg><s>Thicken.1</s></li>
        <li class="d3 off"><span class="vis"><svg><use href="#eye"/></svg></span><svg class="tw"><use href="#caret"/></svg><svg class="ic"><use href="#body"/></svg><span>Split</span></li>
        <li class="leaf off"><span class="vis"><svg><use href="#eye"/></svg></span><span class="tw"></span><svg class="ic"><use href="#sketch"/></svg><span>Sketch.2</span></li>
        <li class="leaf"><span class="vis"></span><span class="tw"></span><svg class="ic"><use href="#splitbody"/></svg><span>Split.1</span></li>
      </ul>
    </div>
  </aside>

  <form class="dialog">
    <div class="dialog-tabs"><button type="button" aria-label="Thicken"><svg><use href="#thicken"/></svg></button></div>
    <div class="dialog-head"><h2>Thicken</h2>
      <button type="button" aria-label="OK"><svg viewBox="0 0 10 10"><path d="M1 5.500L4 8.500 9 2" fill="none" stroke="#4caf3c" stroke-width="1.700"/></svg></button>
      <button type="button" aria-label="Cancel"><svg viewBox="0 0 10 10"><path d="M2 2l6 6M8 2L2 8" stroke="#e5402c" stroke-width="1.700"/></svg></button></div>
    <div class="modes">
      <button type="button" class="on"><span><svg><use href="#combine"/></svg></span>Add</button>
      <button type="button"><span><svg viewBox="0 0 14 14"><path d="M5 5l9 5M5 9l9-5" stroke="#444" stroke-width="1.700"/><circle cx="3" cy="4" r="2" fill="none" stroke="#236f97" stroke-width="1.800"/><circle cx="3" cy="10" r="2" fill="none" stroke="#236f97" stroke-width="1.800"/></svg></span>Cut</button>
    </div>
    <div class="faces-head">Faces to thicken <span class="count">44</span><button type="button" aria-label="Face options"><svg><use href="#dots"/></svg></button></div>
    <div class="faces">
      <ul>
        <li>Face.1<button type="button" aria-label="Remove"></button></li><li>Face.2<button type="button" aria-label="Remove"></button></li><li>Face.3<button type="button" aria-label="Remove"></button></li>
        <li>Face.4<button type="button" aria-label="Remove"></button></li><li>Face.5<button type="button" aria-label="Remove"></button></li><li>Face.6<button type="button" aria-label="Remove"></button></li>
        <li>Face.7<button type="button" aria-label="Remove"></button></li><li>Face.8<button type="button" aria-label="Remove"></button></li><li>Face.9<button type="button" aria-label="Remove"></button></li>
        <li>Face.10<button type="button" aria-label="Remove"></button></li><li>Face.11<button type="button" aria-label="Remove"></button></li><li>Face.12<button type="button" aria-label="Remove"></button></li>
        <li class="next"></li><li class="next"></li><li class="next"></li>
      </ul>
      <span class="thumb"></span>
    </div>
    <label class="body-sel"><input type="checkbox"> Body selection</label>
    <h3>Direction 1</h3>
    <span class="drop"><select aria-label="Direction 1"><option>Blind</option></select></span>
    <div class="distance"><label for="dist">Distance</label>
      <button type="button" aria-label="Reverse direction"><svg viewBox="0 0 10 10"><path d="M1 6l4-4M5 8.500l4-4" stroke="#555" stroke-width="1.700"/><path d="M2.500 .5H6.500v4zM3.500 9.500V6l4 3.500z" fill="#555"/></svg></button>
      <input id="dist" type="text" value="2 mm"></div>
    <button type="button" class="fold">Direction 2</button>
    <button type="button" class="fold">Advanced</button>
  </form>

  <div class="view-tools">
    <div class="view-row">
      <button class="back" aria-label="Collapse view tools"><svg><use href="#left"/></svg></button>
      <svg class="viewcube" viewBox="0 -12 276 276">
        <path d="M40 90L147 43l83 49 5 112-105 49-87-50z" fill="#f8f8f8" stroke="#d2d2d2" stroke-width="3"/>
        <path d="M40 90l82 40 108-38M122 130l8 123M147 43l2 100-106 60M149 143l86 61" fill="none" stroke="#dcdcdc" stroke-width="2"/>
        <path d="M147 45v40" stroke="#46a5d8" stroke-width="8"/><path d="M50 203l75-30" stroke="#ea6257" stroke-width="7"/><path d="M180 176l55 32" stroke="#72a84e" stroke-width="7"/>
        <path d="M145 82l42 22v62l-44-22z" fill="#c5b5b8"/><path d="M95 153l50-22 44 25-55 26z" fill="#e2d6da"/><path d="M134 182v7l53-24v-8z" fill="#a99da0"/>
        <path d="M100 160v47M136 180v48M183 160v48M147 170v16" stroke="#405a69" stroke-width="8"/>
        <path d="M98 130l42-18M140 153l50-18" stroke="#3f5e70" stroke-width="10"/>
        <text x="144" y="32">Z</text><text x="26" y="224">X</text><text x="251" y="228">Y</text>
      </svg>
    </div>
    <span class="drop units"><select aria-label="Units"><option>mm</option></select></span>
    <button class="assistant" aria-label="Assistant"><svg viewBox="0 0 20 16"><path d="M1 13Q1 2 8 2q6 0 8 9l3 2-3 0H2z" fill="#e4e4e4" stroke="#444" stroke-width="1.200"/><path d="M1 13h12l3-2" fill="none" stroke="#444" stroke-width="1.300"/><path d="M5 7h1.500M8 7h1.500M11 7h1.500" stroke="#333" stroke-width="1.500"/></svg></button>
  </div>
</main>

<footer class="dock">
  <div class="dock-tabs">
    <button class="on pinned">Standard</button><button>Sketch</button><button class="on">Features</button><button>Surfaces</button><button>Assembly</button><button>Design Guidance</button><button>Tools</button><button>Lifecycle</button><button>Marketplace</button><button>View</button>
  </div>
  <div class="ribbon">
    <button class="hide" aria-label="Hide toolbar"><svg><use href="#chev"/></svg></button>
    <div class="group five"><button class="more"><svg><use href="#new"/></svg>New</button><button><svg><use href="#close"/></svg>Close</button><button><svg><use href="#save"/></svg>Save</button><button class="more"><svg><use href="#saveas"/></svg>Save As</button><button class="more"><svg><use href="#solve"/></svg>Solve</button></div>
    <div class="group one"><button><svg><use href="#switch"/></svg>Switch App</button></div>
    <div class="group one"><button class="more"><svg><use href="#gear"/></svg>Common Preferen…</button></div>
    <div class="group two"><button><svg><use href="#undo"/></svg>Undo</button><button disabled><svg viewBox="0 0 20 20"><use href="#undo" transform="matrix(-1 0 0 1 20 0)"/></svg>Redo</button></div>
    <div class="group one last"><button class="more"><svg><use href="#help"/></svg>User Assistance</button></div>
    <div class="group features">
      <button class="more"><svg><use href="#cube"/></svg>Cube</button><button class="more"><svg><use href="#plane"/></svg>Plane</button><button class="more"><svg><use href="#extrude"/></svg>Extrude</button><button class="more"><svg><use href="#revolve"/></svg>Revolve</button><button class="more"><svg><use href="#sweep"/></svg>Sweep</button><button class="more"><svg><use href="#loft"/></svg>Loft</button><button class="more"><svg><use href="#fillet"/></svg>Fillet</button><button class="more"><svg><use href="#hole"/></svg>Hole</button><button><svg><use href="#draft"/></svg>Draft</button><button><svg><use href="#shell"/></svg>Shell</button><button class="on"><svg><use href="#thicken"/></svg>Thicken</button><button><svg><use href="#mirror"/></svg>Mirror</button><button class="more"><svg><use href="#pattern"/></svg>Linear Pattern</button><button><svg><use href="#rib"/></svg>Rib</button><button class="more"><svg><use href="#splitface"/></svg>Split Face</button><button><svg><use href="#combine"/></svg>Combine</button><button class="more"><svg><use href="#move"/></svg>Move Face</button>
    </div>
  </div>
  <div class="scroll"><span></span></div>
</footer>
<script src="app.js"></script>
</body>
</html>
```

FILE: app.js
```js
// The distance field opens ready for typing over.
const distance = document.getElementById('dist');
distance.focus({ preventScroll: true });
distance.select();
```

FILE: styles.css
```css
* { box-sizing: border-box; }
body { margin: 0; min-height: 100vh; display: flex; flex-direction: column; border-left: 2px solid #f0f0f0; background: #fff; color: #444; font: 8px/10px "Liberation Sans", Arial, sans-serif; overflow: hidden; }
button { padding: 0; border: 0; background: none; color: inherit; font: inherit; display: flex; align-items: center; justify-content: center; }
input, select { font: inherit; color: inherit; }
a { color: inherit; text-decoration: none; }
h1, h2, h3, ul { margin: 0; padding: 0; font-size: 8px; font-weight: normal; list-style: none; }
svg { flex: none; }
.defs { position: absolute; width: 0; height: 0; }
.i6 { width: 6px; height: 6px; }
.i10 { width: 10px; height: 10px; }
.i14 { width: 14px; height: 14px; }
.i20 { width: 20px; height: 14px; }

.topbar { position: relative; height: 26px; display: grid; grid-template-columns: 455px 224px 1fr auto auto; align-items: center; background: #005686; color: #fff; font-family: Lato, "Open Sans", sans-serif; font-size: 10px; }
.brand { display: flex; align-items: center; padding-left: 5px; }
.logo { width: 20px; height: 20px; }
.brand-text { margin-left: 61px; }
.app-menu { margin-left: 5px; gap: 3px; }
.compass { position: absolute; left: 31px; top: -1px; width: 44px; height: 44px; z-index: 2; }
.compass svg { width: 44px; height: 44px; }
.compass-text { font: bold 20px "Liberation Sans", sans-serif; fill: #fff; text-anchor: middle; }
.search { height: 19px; display: flex; align-items: center; padding: 0 6px; border-radius: 10px; background: #fff; }
.search input { flex: 1; min-width: 0; padding: 0 2px; border: 0; outline: 0; background: none; color: #444; font: 9px "Liberation Sans", Arial, sans-serif; }
.search input::placeholder { color: #999; }
.search svg { width: 13px; height: 13px; }
.tag { justify-self: start; margin-left: 7px; }
.tag svg { width: 14px; height: 14px; }
.account { display: flex; flex-direction: column; align-items: flex-end; line-height: 10px; }
.account > span { margin-right: 8px; }
.tenant { gap: 3px; font-weight: bold; }
.tools { display: flex; margin-left: 3px; }
.tools button { position: relative; width: 28px; height: 26px; }
.tools button:last-child { width: 25px; }
.tools .avatar { width: 32px; }
.tools svg { width: 16px; height: 16px; }
.badge { position: absolute; left: 17px; top: 1px; width: 9px; height: 9px; border-radius: 5px; background: #f08a1d; font: bold 7px/9px "Liberation Sans", sans-serif; }

.tabs { height: 26px; display: flex; align-items: stretch; background: #f8f8f8; border-bottom: 1px solid #dfdfdf; color: #777; font-size: 9px; }
.tabs a { display: flex; align-items: center; padding: 0 12px; }
.tabs .active { gap: 10px; margin: 0 4px 0 13px; padding: 2px 8px 0; border-bottom: 2px solid #3f97cf; color: #555; }
.tabs .wide { padding-left: 20px; }
.menu { width: 28px; margin-right: 58px; }
.menu svg { width: 13px; height: 13px; }
.add svg { width: 10px; height: 10px; }
.nav-tools { margin-left: auto; padding-right: 4px; display: flex; gap: 11px; }
.comments { margin-left: 4px; }

.titlebar { height: 27px; display: flex; align-items: center; gap: 7px; padding-left: 8px; margin-right: 5px; border-bottom: 1px solid #e8e8e8; color: #777; }
.titlebar h1 { font-weight: bold; }
.app-icon { display: flex; align-items: center; justify-content: center; width: 10px; height: 10px; background: #e0241b; }
.app-icon svg { width: 8px; height: 8px; }
.window-tools { margin-left: auto; display: flex; color: #666; }
.window-tools button { width: 28px; height: 20px; }
.window-tools svg { width: 12px; height: 12px; }
.window-tools .small { width: 10px; height: 10px; }

.workspace { position: relative; flex: 1; display: flex; align-items: flex-start; }
.model { position: absolute; left: 288px; top: 11px; width: 310px; height: 437px; overflow: hidden; }

.manager { align-self: stretch; width: 180px; margin: 1px auto 2px 7px; display: flex; flex-direction: column; border: 1px solid #bbb; border-left: 0; background: #fff; }
.collapse { height: 11px; display: flex; justify-content: flex-end; padding-right: 1px; background: #f0f0f0; border-bottom: 1px solid #d5d5d5; color: #666; }
.collapse svg { width: 7px; height: 7px; }
.panel-tabs { height: 15px; background: #cfd3d4; display: flex; }
.panel-tabs button { width: 21px; background: #f0f0f0; border-right: 1px solid #bbb; }
.panel-tabs svg { width: 10px; height: 11px; }
.panel-head { height: 25px; display: flex; align-items: center; padding-left: 6px; background: #f0f0f0; border-bottom: 1px solid #ddd; }
.panel-head h2 { color: #333; }
.panel-head button { width: 19px; height: 15px; margin-left: auto; border-left: 1px solid #d8d8d8; }
.panel-head svg, .faces-head svg { width: 4px; height: 11px; }
.tree-window { flex: 1; min-height: 0; overflow: hidden; display: flex; flex-direction: column; }
.tree { flex: 1; margin-top: -2px; display: grid; grid-auto-rows: 1fr; }
.tree li { display: flex; align-items: center; white-space: nowrap; }
.vis { align-self: stretch; width: 17px; border-right: 1px solid #ececec; display: flex; align-items: center; justify-content: center; }
.vis svg { width: 11px; height: 9px; }
.tw { width: 10px; height: 9px; margin-right: 5px; }
.d1 .tw { margin-left: 7px; }
.d2 .tw { margin-left: 20px; }
.d3 .tw, .leaf .tw { margin-left: 32px; }
.ic { width: 13px; height: 13px; margin-right: 2px; }
.ic + span { margin-left: 3px; }
.leaf .tw { margin-right: 18px; }
.leaf .ic + b { margin-left: 3px; }
.link { color: #2b87bd; }
.link .tw { height: 7px; margin-right: 4px; }
.planes > .ic { margin-left: 50px; margin-right: 8px; }
.picked { height: 15px; width: 57px; display: flex; align-items: center; justify-content: space-around; background: #d5e7f1; }
.planes .picked .ic { margin: 0; }
.planes .ic + .picked { margin: 0; }
.plane-name { font: italic bold 7px "Liberation Sans", sans-serif; text-anchor: middle; fill: #222; }
.off > span, .off > s { color: #999; }
.off .ic { opacity: .5; }
.leaf .rail { align-self: stretch; width: 2px; height: auto; margin: 0 22px 0 36px; background: #46a3d8; }
.leaf .idle { width: 1px; margin: 0 23px 9px 36px; background: #ccc; }
.leaf .handle { width: 5px; margin: 1px 20px 1px 35px; border-radius: 1px; }
.current { background: #d5e7f1; }
.current b { text-decoration: underline; color: #333; }

.dialog { position: relative; width: 183px; margin: 21px 183px 0 0; background: #f0f0f0; border: 1px solid #c4c8ca; border-radius: 2px; box-shadow: 0 2px 5px rgba(0,0,0,.2); padding-bottom: 3px; }
.dialog-tabs { height: 15px; display: flex; background: #cfd3d4; }
.dialog-tabs button { width: 23px; background: #f0f0f0; }
.dialog-tabs svg { width: 12px; height: 12px; }
.dialog-head { height: 16px; display: flex; align-items: center; gap: 11px; padding: 0 5px 0 6px; border-bottom: 1px solid #d0d0d0; }
.dialog-head h2 { margin-right: auto; font-weight: bold; color: #777; }
.dialog-head svg { width: 10px; height: 10px; }
.modes { display: flex; justify-content: center; gap: 46px; margin-top: 6px; padding-right: 7px; }
.modes button { width: 24px; flex-direction: column; gap: 3px; color: #333; }
.modes span { width: 24px; height: 24px; display: flex; align-items: center; justify-content: center; border: 1px solid transparent; border-radius: 2px; }
.modes .on span { border-color: #62a9d3; background: #d3e6f1; }
.modes svg { width: 13px; height: 13px; }
.faces-head { height: 12px; margin: 7px 4px 2px; display: flex; align-items: center; color: #333; }
.faces-head button { margin: 0 4px 0 auto; }
.count { margin-left: 4px; padding: 0 3px; border-radius: 5px; background: #2b87c0; color: #fff; font-weight: bold; }
.faces { height: 68px; margin: 0 4px; display: flex; border: 1px solid #82c1e6; border-left: 0; border-radius: 2px; background: #d6e7f1; overflow: hidden; }
.faces::before { content: ""; width: 5px; background: #5fbb4c; }
.faces ul { flex: 1; display: flex; flex-wrap: wrap; align-content: flex-start; gap: 2px 3px; padding: 3px 0 0 3px; }
.faces li { height: 13px; display: flex; align-items: center; padding-left: 3px; border: 1px solid #c3c7c9; border-radius: 2px; background: #f5f5f5; color: #888; }
.faces .next { width: 47px; }
.faces li button { width: 12px; height: 11px; margin-left: 1px; border-left: 1px solid #c3c7c9; }
.faces li button::before { content: ""; width: 7px; height: 7px; background: linear-gradient(45deg, transparent 43%, #bbb 43% 57%, transparent 57%), linear-gradient(-45deg, transparent 43%, #bbb 43% 57%, transparent 57%); }
.thumb { width: 4px; height: 17px; margin: 1px 0; background: #aaa; }
.body-sel { height: 25px; margin: 0 5px; display: flex; align-items: center; gap: 6px; border-bottom: 1px solid #e2e2e2; color: #333; padding-top: 3px; }
.body-sel input { appearance: none; width: 15px; height: 9px; margin: 0; border: 1px solid #bbb; border-radius: 5px; background: radial-gradient(circle at 4px 50%, #fff 3px, #ccc 4px, #f7f7f7 5px); }
.dialog h3 { margin: 5px 4px 5px; color: #333; font-weight: bold; }
.drop { display: flex; position: relative; margin: 0 4px; }
.drop select { appearance: none; width: 100%; height: 16px; padding: 0 3px; border: 1px solid #bbb; border-radius: 2px; background: #f2f2f2; color: #333; }
.drop::after { content: ""; position: absolute; right: 4px; top: 6px; border: 3px solid transparent; border-top: 5px solid #222; border-bottom: 0; }
.distance { margin: 3px 4px 4px; display: flex; align-items: center; color: #333; }
.distance button { margin: 0 8px 0 auto; }
.distance svg { width: 10px; height: 10px; }
.distance input { width: 87px; height: 16px; padding: 0 3px; border: 1px solid #62a9d3; border-radius: 2px; outline: 0; background: #fff; }
.distance input::selection { background: #3367d1; color: #fff; }
.fold { width: calc(100% - 8px); height: 22px; margin: 0 4px; justify-content: flex-start; border-top: 1px solid #e2e2e2; color: #333; font-weight: bold; }
.fold::before { content: ""; margin: 0 11px 0 1px; border: 3px solid transparent; border-left: 5px solid #777; border-right: 0; }

.view-tools { align-self: stretch; width: 148px; display: flex; flex-direction: column; padding: 10px 16px 68px 0; }
.view-row { display: flex; justify-content: space-between; align-items: center; }
.back { width: 28px; height: 22px; background: #f7f7f7; }
.back svg { width: 9px; height: 9px; }
.viewcube { width: 92px; height: 92px; overflow: visible; }
.viewcube text { font: bold 38px "Open Sans", sans-serif; text-anchor: middle; fill: #46a5d8; }
.viewcube text:nth-of-type(2) { fill: #e8505b; }
.viewcube text:nth-of-type(3) { fill: #68a445; }
.units { width: 46px; margin: 13px 17px 0 auto; }
.units select { height: 15px; background: #fff; }
.assistant { width: 28px; height: 28px; margin-top: auto; border: 1px solid #ddd; border-radius: 50%; background: #fff; box-shadow: 0 1px 3px rgba(0,0,0,.15); align-self: flex-end; }
.assistant svg { width: 19px; height: 15px; }

.dock { position: relative; margin: 0 2px 0 7px; }
.dock-tabs { display: flex; margin-left: 399px; }
.dock-tabs button { height: 14px; padding: 0 4px; background: #cfd3d4; border-right: 1px solid #b9bdbe; color: #555; }
.dock-tabs .on { background: #f3f3f3; color: #333; }
.dock-tabs .pinned { padding-left: 6px; background: linear-gradient(135deg, #2b87c0 4px, #f3f3f3 4px); }
.ribbon { height: 47px; display: flex; border-top: 1px solid #bbb; border-left: 1px solid #bbb; background: #f0f0f0; }
.hide { width: 13px; border-right: 1px solid #c5c5c5; align-items: flex-start; padding-top: 2px; color: #777; }
.hide svg { width: 7px; height: 7px; }
.group { display: flex; align-items: flex-start; padding-top: 3px; border-right: 1px solid #d5d5d5; }
.group button { position: relative; flex: 1 1 0; min-width: 0; flex-direction: column; line-height: 9px; color: #333; white-space: nowrap; }
.group button > svg { width: 22px; height: 22px; padding: 1px; }
.group button:disabled { opacity: .45; }
.group .on > svg { background: #d3e8f4; border: 1px solid #74b4da; padding: 1px; border-radius: 2px; }
.group .more::before { content: ""; position: absolute; left: calc(50% + 7px); top: 17px; border: 2px solid transparent; border-right-color: #222; border-bottom-color: #222; }
.five { width: 220px; padding-left: 2px; padding-right: 2px; }
.one { width: 48px; }
.one button { white-space: normal; }
.two { width: 91px; padding-left: 1px; padding-right: 3px; }
.last { border-right-color: #999; }
.features { flex: 1; min-width: 0; border-right: 0; padding-left: 2px; }
.features button:nth-child(13) { white-space: normal; }
.scroll { height: 5px; padding: 0 0 2px 14px; background: #f0f0f0; display: flex; }
.scroll span { width: 87%; background: #b0b0b0; }
```
